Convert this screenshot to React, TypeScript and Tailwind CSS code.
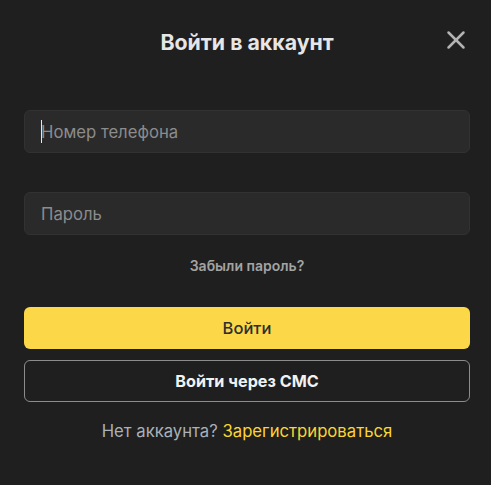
import { X } from 'lucide-react'

export default function App() {
  return (
    <div className="min-h-[485px] w-full bg-[#1f1f1f] font-['Inter',sans-serif] overflow-hidden">
      <div className="pl-6 pr-[21px] pt-[27px]">
        <div className="relative flex items-center justify-center h-[32px]">
          <h2 className="text-[21.3px] font-bold text-[#e6e6e6]">Войти в аккаунт</h2>
          <button className="absolute right-[-1px] top-[-2px] text-[#b3b3b3]">
            <X className="h-[30px] w-[30px]" strokeWidth={2} />
          </button>
        </div>

        <div className="mt-[51px] flex flex-col">
          <div className="relative">
            <input
              placeholder="Номер телефона"
              className="h-[43px] w-full rounded-md border border-[#323232] bg-[#2a2a2a] px-4 text-[16.7px] text-white placeholder:text-[#8c8c8c] outline-none"
            />
            {/* focused caret */}
            <span className="pointer-events-none absolute left-[17px] top-[10px] h-[23px] w-px bg-[#e8e8e8]" />
          </div>
          <input
            type="password"
            placeholder="Пароль"
            className="mt-[39px] h-[43px] w-full rounded-md border border-[#323232] bg-[#2a2a2a] px-4 text-[16.7px] text-white placeholder:text-[#8c8c8c] outline-none"
          />
          <a className="mt-[20px] self-center text-[14px] font-semibold text-[#a3a3a3]">Забыли пароль?</a>

          <button className="mt-[31px] h-[42px] w-full rounded-md bg-[#fcd748] text-[16.5px] font-medium text-[#2e2e2e]">
            Войти
          </button>
          <button className="mt-[11px] h-[42px] w-full rounded-md border border-[#8c8c8c] text-[16.2px] font-bold text-[#f2f2f2]">
            Войти через СМС
          </button>

          <p className="mt-[17px] text-center text-[16.7px] text-[#a9b1b9]">
            Нет аккаунта? <span className="text-[#fcd535]">Зарегистрироваться</span>
          </p>
        </div>
      </div>
    </div>
  )
}
